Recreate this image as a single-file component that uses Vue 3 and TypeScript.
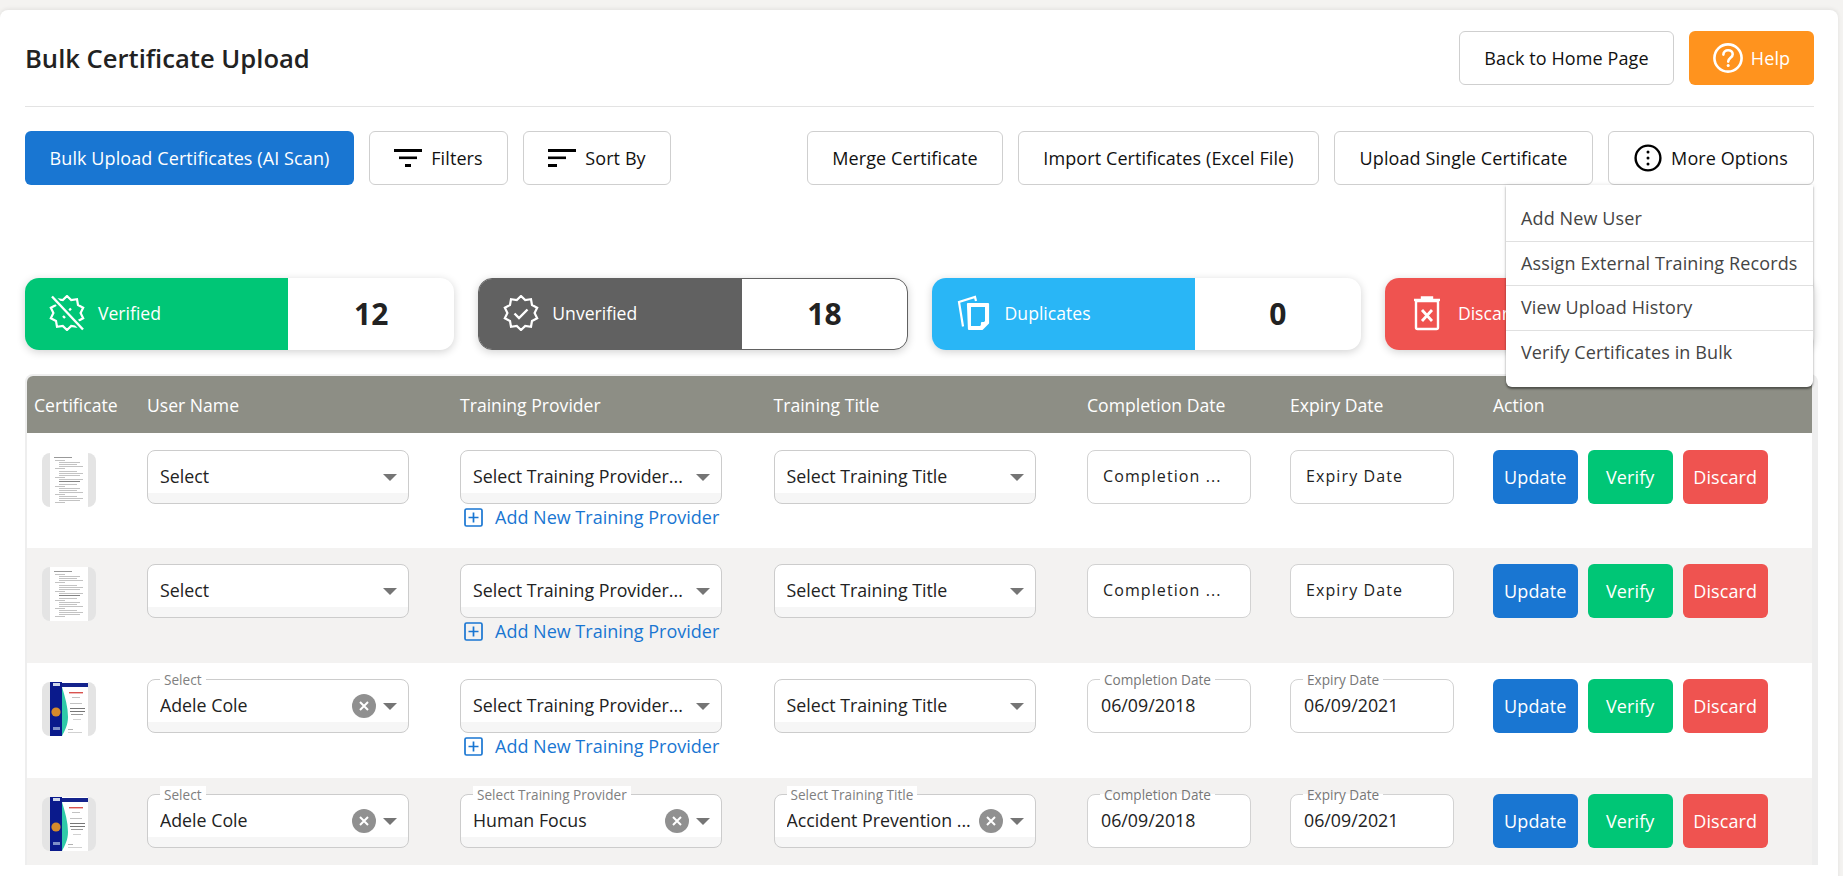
<script setup lang="ts">
interface SelectField {
  label?: string
  value: string
  clearable?: boolean
}

interface DateField {
  label?: string
  value: string
}

interface UploadRow {
  thumb: 'doc' | 'cert'
  selects: SelectField[]
  dates: DateField[]
  addProvider: boolean
}

interface Stat {
  label: string
  count: number
  tone: string
  icon: string
}

const stats: Stat[] = [
  { label: 'Verified', count: 12, tone: 'verified', icon: 'off' },
  { label: 'Unverified', count: 18, tone: 'unverified', icon: 'seal' },
  { label: 'Duplicates', count: 0, tone: 'duplicates', icon: 'copy' },
  { label: 'Discarded', count: 0, tone: 'discarded', icon: 'trash' },
]

const menuItems = [
  'Add New User',
  'Assign External Training Records',
  'View Upload History',
  'Verify Certificates in Bulk',
]

const emptyProvider: SelectField = { value: 'Select Training Provider...' }
const emptyTitle: SelectField = { value: 'Select Training Title' }
const adele: SelectField = { label: 'Select', value: 'Adele Cole', clearable: true }
const filledDates: DateField[] = [
  { label: 'Completion Date', value: '06/09/2018' },
  { label: 'Expiry Date', value: '06/09/2021' },
]
const emptyDates: DateField[] = [{ value: 'Completion ...' }, { value: 'Expiry Date' }]

const rows: UploadRow[] = [
  { thumb: 'doc', selects: [{ value: 'Select' }, emptyProvider, emptyTitle], dates: emptyDates, addProvider: true },
  { thumb: 'doc', selects: [{ value: 'Select' }, emptyProvider, emptyTitle], dates: emptyDates, addProvider: true },
  { thumb: 'cert', selects: [adele, emptyProvider, emptyTitle], dates: filledDates, addProvider: true },
  {
    thumb: 'cert',
    selects: [
      adele,
      { label: 'Select Training Provider', value: 'Human Focus', clearable: true },
      { label: 'Select Training Title', value: 'Accident Prevention ...', clearable: true },
    ],
    dates: filledDates,
    addProvider: false,
  },
]

// seal outline used by the verified / unverified badges
function sealPoints(tips: number, outer: number, inner: number): string {
  const pts: string[] = []
  for (let i = 0; i < tips * 2; i++) {
    const r = i % 2 === 0 ? outer : inner
    const a = (Math.PI * i) / tips - Math.PI / 2
    pts.push(`${(18 + r * Math.cos(a)).toFixed(2)},${(18 + r * Math.sin(a)).toFixed(2)}`)
  }
  return pts.join(' ')
}

const seal = sealPoints(10, 17, 13.6)
const docLines = [7, 9, 11, 13, 15, 18, 20, 22, 24, 26, 28, 31, 33, 35, 37, 39, 41, 43, 45, 47, 49]
</script>

<template>
  <div class="page">
    <div class="card">
      <header class="top-bar">
        <h1>Bulk Certificate Upload</h1>
        <div class="top-actions">
          <button class="btn btn-outline home-btn">Back to Home Page</button>
          <button class="btn btn-help">
            <svg width="30" height="30" viewBox="0 0 30 30" fill="none" stroke="#fff" stroke-width="2.6">
              <circle cx="15" cy="15" r="13.6" />
              <path d="M10.4 11.6c0-2.8 2.1-4.4 4.7-4.4 2.6 0 4.6 1.6 4.6 4 0 3.6-4.5 3.6-4.5 7.4" stroke-linecap="round" />
              <circle cx="15.2" cy="22.6" r="1.5" fill="#fff" stroke="none" />
            </svg>
            Help
          </button>
        </div>
      </header>

      <div class="toolbar">
        <div class="toolbar-group">
          <button class="btn btn-primary bulk-btn">Bulk Upload Certificates (AI Scan)</button>
          <button class="btn btn-outline filter-btn">
            <svg width="28" height="20" viewBox="0 0 28 20" fill="#000">
              <rect x="0" y="1" width="28" height="3" />
              <rect x="5" y="8.5" width="18" height="2.6" />
              <rect x="11" y="16" width="6" height="3" />
            </svg>
            Filters
          </button>
          <button class="btn btn-outline sort-btn">
            <svg width="28" height="20" viewBox="0 0 28 20" fill="#000">
              <rect x="0" y="1" width="28" height="3" />
              <rect x="0" y="8.5" width="18" height="2.6" />
              <rect x="0" y="16" width="9" height="3" />
            </svg>
            Sort By
          </button>
        </div>
        <div class="toolbar-group">
          <button class="btn btn-outline merge-btn">Merge Certificate</button>
          <button class="btn btn-outline import-btn">Import Certificates (Excel File)</button>
          <button class="btn btn-outline single-btn">Upload Single Certificate</button>
          <div class="more-wrap">
            <button class="btn btn-outline more-btn">
              <svg width="28" height="28" viewBox="0 0 28 28" fill="none" stroke="#000" stroke-width="2.4">
                <circle cx="14" cy="14" r="12.4" />
                <circle cx="14" cy="8" r="1.5" fill="#000" stroke="none" />
                <circle cx="14" cy="14" r="1.5" fill="#000" stroke="none" />
                <circle cx="14" cy="20" r="1.5" fill="#000" stroke="none" />
              </svg>
              More Options
            </button>
            <ul class="more-menu">
              <li v-for="item in menuItems" :key="item">{{ item }}</li>
            </ul>
          </div>
        </div>
      </div>

      <section class="stats">
        <div v-for="stat in stats" :key="stat.label" class="stat" :class="stat.tone">
          <div class="stat-label">
            <svg class="stat-icon" width="36" height="36" viewBox="0 0 36 36" fill="none" stroke="#fff" stroke-width="2.2">
              <template v-if="stat.icon === 'seal'">
                <polygon :points="seal" stroke-linejoin="miter" />
                <path d="M11.5 18.5l4.5 4.5 8.5-8.5" stroke-width="2.4" />
              </template>
              <template v-else-if="stat.icon === 'off'">
                <polygon :points="seal" stroke-linejoin="miter" />
                <path d="M20 15.5l2-2M16 23l-2-2" stroke-width="2.4" />
                <path d="M3 1.5l31 33" stroke="#00c676" stroke-width="6" />
                <path d="M3 1.5l31 33" stroke-width="2.4" />
              </template>
              <template v-else-if="stat.icon === 'copy'">
                <path d="M7 31.5L3 7l16-5 1 4" />
                <path d="M12 9h20v19l-6 6H13z" fill="#fff" stroke-linejoin="round" />
                <path d="M15 12h14v14l-5 5h-9z" fill="#29b6f6" stroke="none" />
                <path d="M26 34v-6h6" stroke-linejoin="round" />
              </template>
              <template v-else>
                <path d="M5 5h26M13 5V2.5h10V5" stroke-width="2.4" />
                <rect x="7" y="6" width="22" height="28" rx="1.5" stroke-width="2.4" />
                <path d="M13 15l10 11M23 15L13 26" stroke-width="2.8" />
              </template>
            </svg>
            <span>{{ stat.label }}</span>
          </div>
          <div class="stat-count">{{ stat.count }}</div>
        </div>
      </section>

      <section class="table">
        <div class="table-row table-head">
          <div class="head-cert">Certificate</div>
          <div>User Name</div>
          <div>Training Provider</div>
          <div>Training Title</div>
          <div>Completion Date</div>
          <div>Expiry Date</div>
          <div>Action</div>
        </div>

        <div v-for="(row, r) in rows" :key="r" class="table-row body-row" :class="{ 'with-add': row.addProvider }">
          <div class="thumb">
            <svg v-if="row.thumb === 'doc'" width="38" height="54" viewBox="0 0 38 54">
              <rect width="38" height="54" fill="#fff" />
              <rect x="4" y="4" width="18" height="1" fill="#999" />
              <rect
                v-for="(y, i) in docLines"
                :key="y"
                :x="i % 4 === 0 ? 5 : 9"
                :y="y"
                :width="i % 4 === 0 ? 10 : 24 - (i % 3) * 3"
                height="0.8"
                :fill="i === 10 ? '#666' : '#b4b4b4'"
              />
            </svg>
            <svg v-else width="38" height="54" viewBox="0 0 38 54">
              <rect width="38" height="54" fill="#fff" />
              <rect x="12" y="1" width="26" height="4" fill="#14238c" />
              <path d="M0 0h12v54H0z" fill="#0a1a8c" />
              <path d="M12 5c3 10 6 20 6 30 0 8-3 13-6 19z" fill="#2fc9a8" />
              <rect x="3" y="1" width="7" height="3" fill="#cfd7ea" />
              <circle cx="6" cy="30" r="4.6" fill="#d58a2c" />
              <rect x="3" y="45" width="7" height="3" fill="#7f90c8" />
              <rect x="19" y="10" width="14" height="1.4" fill="#d9534f" />
              <rect x="22" y="15" width="8" height="0.9" fill="#bbb" />
              <rect x="20" y="21" width="12" height="0.9" fill="#bbb" />
              <rect x="20" y="26" width="15" height="1" fill="#777" />
              <rect x="20" y="29" width="15" height="1" fill="#777" />
              <rect x="21" y="32" width="12" height="1" fill="#999" />
              <rect x="23" y="37" width="8" height="0.9" fill="#ccc" />
              <rect x="18" y="47" width="5" height="0.9" fill="#aaa" />
              <rect x="18" y="50" width="14" height="0.9" fill="#ccc" />
            </svg>
          </div>

          <div v-for="(field, f) in row.selects" :key="f" class="select-cell">
            <div class="select-box">
              <span v-if="field.label" class="float-label">{{ field.label }}</span>
              <span class="select-value">{{ field.value }}</span>
              <span v-if="field.clearable" class="clear-btn">
                <svg width="24" height="24" viewBox="0 0 24 24">
                  <circle cx="12" cy="12" r="12" fill="#909090" />
                  <path d="M8 8l8 8M16 8l-8 8" stroke="#fff" stroke-width="2" />
                </svg>
              </span>
              <span class="caret"></span>
            </div>
            <a v-if="f === 1 && row.addProvider" class="add-link">
              <svg width="19" height="19" viewBox="0 0 19 19" fill="none" stroke="#1976d2" stroke-width="1.7">
                <rect x="1" y="1" width="17" height="17" rx="1.5" />
                <path d="M9.5 4.5v10M4.5 9.5h10" />
              </svg>
              Add New Training Provider
            </a>
          </div>

          <div v-for="date in row.dates" :key="date.value" class="date-cell">
            <div class="date-box" :class="{ empty: !date.label }">
              <span v-if="date.label" class="float-label notch">{{ date.label }}</span>
              {{ date.value }}
            </div>
          </div>

          <div class="actions">
            <button class="btn row-btn btn-primary">Update</button>
            <button class="btn row-btn btn-verify">Verify</button>
            <button class="btn row-btn btn-discard">Discard</button>
          </div>
        </div>
      </section>
    </div>
  </div>
</template>

<style>
html, body { margin: 0; height: 100%; overflow: hidden; background: #f4f3f1; }
</style>

<style scoped>
.page { height: 876px; overflow: hidden; padding-top: 10px; box-sizing: border-box; font-family: "Open Sans", sans-serif; color: #222; }
.card {
  width: 1838px; height: 900px; box-sizing: border-box; background: #fff;
  border-radius: 8px; padding: 21px 24px 0 25px; box-shadow: 0 -1px 4px rgba(0,0,0,0.08);
}

.top-bar {
  display: flex; justify-content: space-between; align-items: center;
  padding-bottom: 21px; border-bottom: 1px solid #e3e3e3;
}
.top-bar h1 { margin: 0; font-size: 25.6px; font-weight: 600; color: #222; }
.top-actions { display: flex; gap: 15px; }

.btn {
  height: 54px; box-sizing: border-box; border-radius: 6px; border: 1px solid transparent;
  font-family: inherit; font-size: 18px; letter-spacing: 0.1px; display: inline-flex; align-items: center; justify-content: center;
  gap: 9px; padding: 0; cursor: pointer; white-space: nowrap;
}
.btn-outline { background: #fff; border-color: #cfcfcf; color: #111; }
.btn-primary { background: #1976d2; color: #fff; }
.btn-help { background: #ff931e; color: #fff; width: 125px; gap: 8px; }
.btn-verify { background: #00c676; color: #fff; }
.btn-discard { background: #ef5350; color: #fff; }
.home-btn { width: 215px; }

.toolbar { display: flex; justify-content: space-between; margin-top: 24px; }
.toolbar-group { display: flex; gap: 15px; }
.bulk-btn { width: 329px; }
.filter-btn { width: 139px; }
.sort-btn { width: 148px; }
.merge-btn { width: 196px; }
.import-btn { width: 301px; }
.single-btn { width: 259px; }
.more-btn { width: 206px; }

.more-wrap { position: relative; }
.more-menu {
  position: absolute; top: 100%; right: 1px; z-index: 5; width: 307px; margin: 0; padding: 12px 0 13px;
  list-style: none; background: #fff; border-radius: 0 0 6px 6px; box-shadow: 0 2px 2px rgba(0,0,0,0.4), 0 0 4px rgba(0,0,0,0.12);
}
.more-menu li {
  height: 43.5px; line-height: 43.5px; padding-left: 15px; font-size: 18px; letter-spacing: 0.12px; color: #444;
  border-bottom: 1px solid #e0e0e0; white-space: nowrap;
}
.more-menu li:last-child { border-bottom: none; }

.stats { display: grid; grid-template-columns: repeat(4, 429.3px); gap: 24px; margin-top: 93px; }
.stat {
  height: 72px; display: flex; border-radius: 14px; overflow: hidden; background: #fff;
  box-shadow: 0 2px 8px rgba(0,0,0,0.18); box-sizing: border-box;
}
.stat-label {
  width: 263px; flex: none; display: flex; align-items: center; gap: 13px; padding: 0 0 2px 24px; box-sizing: border-box;
  color: #fff; font-size: 17.6px;
}
.stat-count { flex: 1; display: flex; align-items: center; justify-content: center; padding-bottom: 2px; font-size: 30px; font-weight: 700; color: #222; }
.verified .stat-label { background: #00c676; }
.unverified { border: 1px solid #616161; }
.unverified .stat-label { background: #616161; }
.duplicates .stat-label { background: #29b6f6; }
.discarded .stat-label { background: #ef5350; }

.table {
  margin-top: 24px; border: 2px solid #eee; border-bottom: none; border-right-width: 6px; border-radius: 8px 8px 0 0;
  overflow: hidden; width: 1793px; box-sizing: border-box;
}
.table-row { display: grid; grid-template-columns: 120px 313px 313.5px 313.5px 203px 203px 1fr; }
.table-head { background: #8d8e85; color: #fff; font-size: 17.6px; height: 57px; align-items: center; }
.head-cert { padding-left: 7px; }
.body-row { padding: 16px 0 17px; }
.body-row.with-add { padding-bottom: 45px; }
.table-head + .body-row { padding-top: 17px; padding-bottom: 44px; }
.body-row:nth-child(odd) { background: #f3f2f1; }

.thumb {
  width: 54px; height: 54px; margin: 3px 0 -3px 15px; background: #e4e4e4; border-radius: 8px;
  display: flex; justify-content: center; overflow: hidden;
}
.thumb svg { filter: blur(0.35px); }
.select-cell { position: relative; }
.select-box {
  position: relative; width: 262px; height: 54px; box-sizing: border-box; display: flex; align-items: center;
  padding: 0 13px 2px 12px; border: 1px solid #ccc; border-radius: 8px; font-size: 17.8px; color: #222;
  background: linear-gradient(#fff 80%, #f6f6f6 80%);
}
.select-value { flex: 1; white-space: nowrap; overflow: hidden; text-overflow: ellipsis; }
.clear-btn { display: flex; margin: 2px 5px 0 5px; }
.caret {
  width: 0; height: 0; border-left: 7px solid transparent; border-right: 7px solid transparent;
  border-top: 7px solid #757575; margin: 3px -2px 0 2px;
}
.float-label {
  position: absolute; left: 12px; top: -9px; height: 18px; line-height: 18px; padding: 0 4px;
  font-size: 13.6px; color: #808080; background: #fff; white-space: nowrap;
}
.add-link {
  position: absolute; left: 4px; top: 55px; display: flex; align-items: center; gap: 12px;
  font-size: 18px; color: #1976d2; white-space: nowrap;
}

.date-box {
  position: relative; width: 164px; height: 54px; box-sizing: border-box; display: flex; align-items: center;
  padding: 0 13px 2px; border: 1px solid #d2d2d2; border-radius: 8px; background: #fff; font-size: 17.8px; color: #222;
}
.date-box.empty { padding-left: 15px; font-size: 16px; letter-spacing: 1.1px; }
.float-label.notch { background: linear-gradient(transparent 8px, #fff 8px); color: #777; }

.actions { display: flex; gap: 10.5px; }
.row-btn { width: 84.5px; }
</style>
